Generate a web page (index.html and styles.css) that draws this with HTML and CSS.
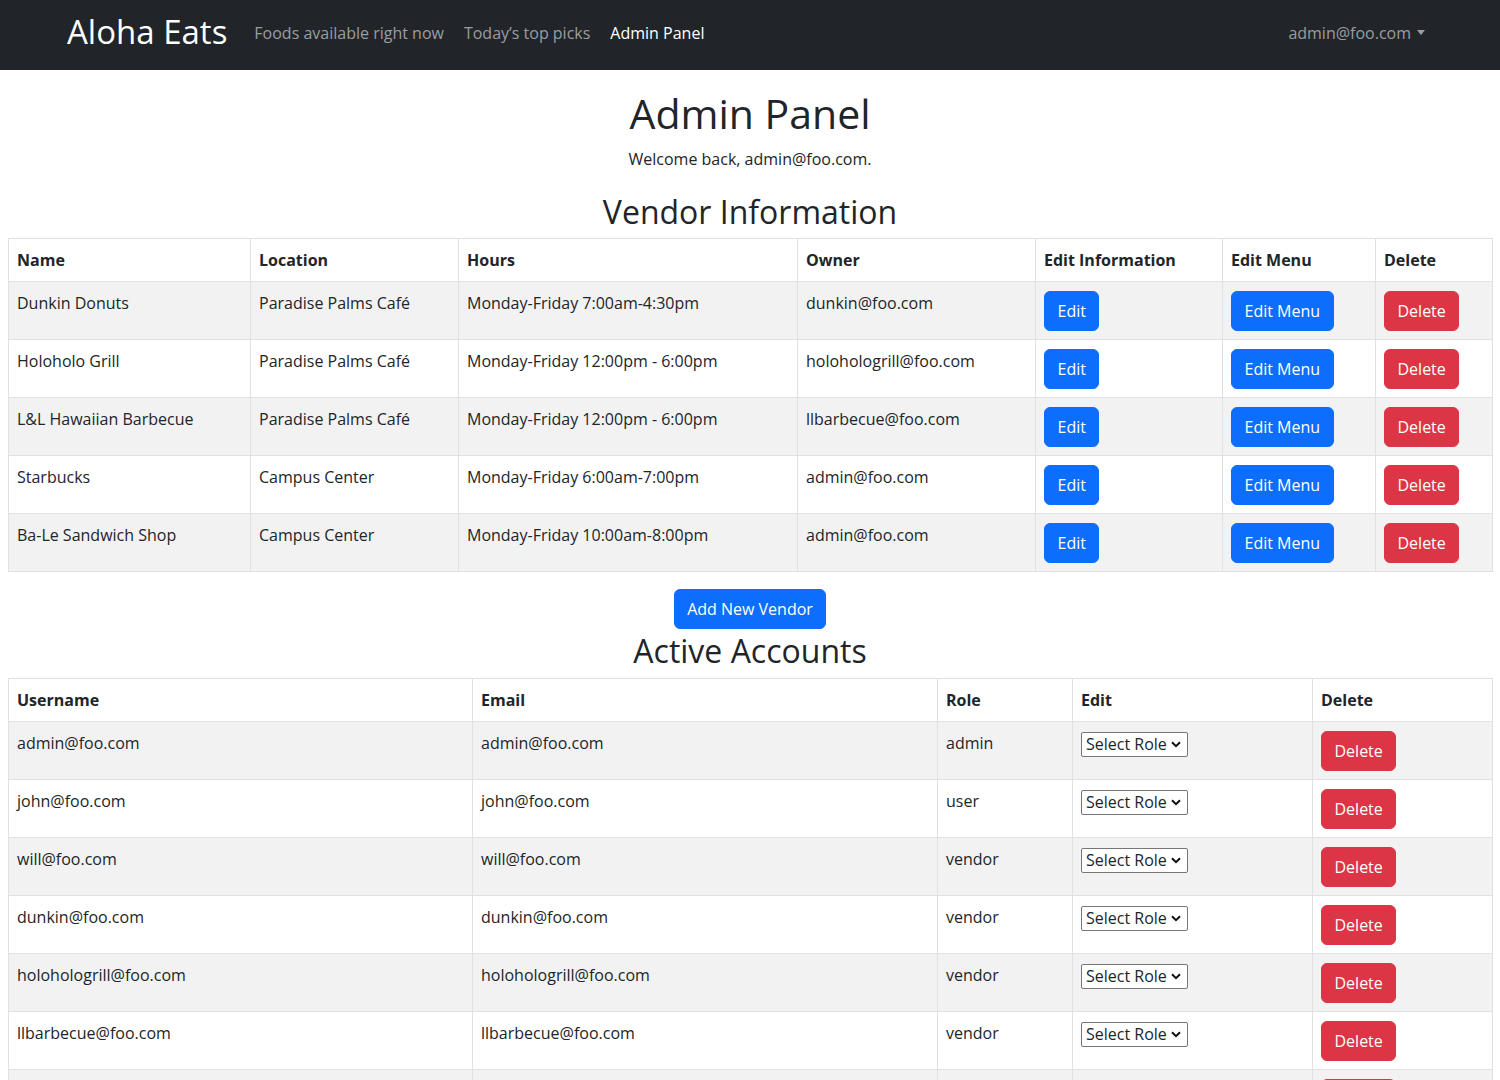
FILE: index.html
```html
<!DOCTYPE html>
<html lang="en">
<head>
<meta charset="utf-8">
<title>Aloha Eats - Admin Panel</title>
<link rel="stylesheet" href="styles.css">
</head>
<body>
<nav class="navbar">
  <div class="nav-left">
    <a class="brand" href="#">Aloha Eats</a>
    <a class="nav-link" href="#">Foods available right now</a>
    <a class="nav-link" href="#">Today’s top picks</a>
    <a class="nav-link active" href="#">Admin Panel</a>
  </div>
  <div class="nav-right">
    <a class="nav-link dropdown-toggle" href="#">admin@foo.com</a>
  </div>
</nav>

<main class="page">
  <h1 class="title">Admin Panel</h1>
  <p class="welcome">Welcome back, admin@foo.com.</p>

  <h2 class="section-title vendor-title">Vendor Information</h2>
  <table class="grid vendors">
    <colgroup>
      <col class="v-name"><col class="v-loc"><col class="v-hours"><col class="v-owner"><col class="v-edit"><col class="v-menu"><col class="v-del">
    </colgroup>
    <thead>
      <tr><th>Name</th><th>Location</th><th>Hours</th><th>Owner</th><th>Edit Information</th><th>Edit Menu</th><th>Delete</th></tr>
    </thead>
    <tbody>
      <tr><td>Dunkin Donuts</td><td>Paradise Palms Café</td><td>Monday-Friday 7:00am-4:30pm</td><td>dunkin@foo.com</td><td><button class="btn blue">Edit</button></td><td><button class="btn blue">Edit Menu</button></td><td><button class="btn red">Delete</button></td></tr>
      <tr><td>Holoholo Grill</td><td>Paradise Palms Café</td><td>Monday-Friday 12:00pm - 6:00pm</td><td>holohologrill@foo.com</td><td><button class="btn blue">Edit</button></td><td><button class="btn blue">Edit Menu</button></td><td><button class="btn red">Delete</button></td></tr>
      <tr><td>L&amp;L Hawaiian Barbecue</td><td>Paradise Palms Café</td><td>Monday-Friday 12:00pm - 6:00pm</td><td>llbarbecue@foo.com</td><td><button class="btn blue">Edit</button></td><td><button class="btn blue">Edit Menu</button></td><td><button class="btn red">Delete</button></td></tr>
      <tr><td>Starbucks</td><td>Campus Center</td><td>Monday-Friday 6:00am-7:00pm</td><td>admin@foo.com</td><td><button class="btn blue">Edit</button></td><td><button class="btn blue">Edit Menu</button></td><td><button class="btn red">Delete</button></td></tr>
      <tr><td>Ba-Le Sandwich Shop</td><td>Campus Center</td><td>Monday-Friday 10:00am-8:00pm</td><td>admin@foo.com</td><td><button class="btn blue">Edit</button></td><td><button class="btn blue">Edit Menu</button></td><td><button class="btn red">Delete</button></td></tr>
    </tbody>
  </table>

  <div class="add-row"><button class="btn blue">Add New Vendor</button></div>

  <h2 class="section-title accounts-title">Active Accounts</h2>
  <table class="grid accounts">
    <colgroup>
      <col class="a-user"><col class="a-email"><col class="a-role"><col class="a-edit"><col class="a-del">
    </colgroup>
    <thead>
      <tr><th>Username</th><th>Email</th><th>Role</th><th>Edit</th><th>Delete</th></tr>
    </thead>
    <tbody>
      <tr><td>admin@foo.com</td><td>admin@foo.com</td><td>admin</td><td><select class="role"><option>Select Role</option><option>admin</option><option>user</option><option>vendor</option></select></td><td><button class="btn red">Delete</button></td></tr>
      <tr><td>john@foo.com</td><td>john@foo.com</td><td>user</td><td><select class="role"><option>Select Role</option><option>admin</option><option>user</option><option>vendor</option></select></td><td><button class="btn red">Delete</button></td></tr>
      <tr><td>will@foo.com</td><td>will@foo.com</td><td>vendor</td><td><select class="role"><option>Select Role</option><option>admin</option><option>user</option><option>vendor</option></select></td><td><button class="btn red">Delete</button></td></tr>
      <tr><td>dunkin@foo.com</td><td>dunkin@foo.com</td><td>vendor</td><td><select class="role"><option>Select Role</option><option>admin</option><option>user</option><option>vendor</option></select></td><td><button class="btn red">Delete</button></td></tr>
      <tr><td>holohologrill@foo.com</td><td>holohologrill@foo.com</td><td>vendor</td><td><select class="role"><option>Select Role</option><option>admin</option><option>user</option><option>vendor</option></select></td><td><button class="btn red">Delete</button></td></tr>
      <tr><td>llbarbecue@foo.com</td><td>llbarbecue@foo.com</td><td>vendor</td><td><select class="role"><option>Select Role</option><option>admin</option><option>user</option><option>vendor</option></select></td><td><button class="btn red">Delete</button></td></tr>
      <tr><td>balesandwich@foo.com</td><td>balesandwich@foo.com</td><td>vendor</td><td><select class="role"><option>Select Role</option><option>admin</option><option>user</option><option>vendor</option></select></td><td><button class="btn red">Delete</button></td></tr>
    </tbody>
  </table>
</main>
</body>
</html>
```

FILE: styles.css
```css
* { box-sizing: border-box; }

html, body {
  margin: 0;
  padding: 0;
}

body {
  font-family: "Open Sans", "Noto Sans", "DejaVu Sans", sans-serif;
  font-size: 16px;
  line-height: 25px;
  color: #212529;
  background: #ffffff;
}

a { text-decoration: none; }

/* Navbar */
.navbar {
  height: 70px;
  background: #212529;
  display: flex;
  align-items: center;
  justify-content: space-between;
  padding: 0 75px 0 67px;
}

.nav-left {
  display: flex;
  align-items: center;
}

.brand {
  color: #ffffff;
  font-size: 33px;
  line-height: 40px;
  margin-right: 27px;
  margin-top: -6px;
}

.nav-link {
  color: #9a9da0;
  font-size: 16px;
  line-height: 25px;
  margin-right: 20px;
  margin-top: -4px;
}

.nav-link.active { color: #ffffff; }

.nav-right { display: flex; align-items: center; }

.nav-right .nav-link {
  margin-right: 0;
  display: inline-flex;
  align-items: center;
}

.dropdown-toggle::after {
  content: "";
  display: block;
  margin-left: 6px;
  margin-top: -2px;
  border-top: 5px solid currentColor;
  border-left: 4px solid transparent;
  border-right: 4px solid transparent;
}

/* Page */
.page {
  padding: 0 8px;
  display: flex;
  flex-direction: column;
}

.title {
  margin: 19px 0 0;
  text-align: center;
  font-size: 41px;
  line-height: 48px;
  font-weight: 500;
}

.welcome {
  margin: 10px 0 0;
  text-align: center;
  font-size: 16px;
  line-height: 25px;
}

.section-title {
  text-align: center;
  font-size: 32px;
  line-height: 38px;
  font-weight: 500;
  margin: 0 0 7px;
}

.vendor-title { margin-top: 21px; }
.accounts-title { margin-top: 3px; margin-bottom: 8px; }

/* Tables */
.grid {
  width: 100%;
  border-collapse: collapse;
  table-layout: fixed;
}

.grid th,
.grid td {
  border: 1px solid #dee2e6;
  padding: 9px 8px 8px;
  text-align: left;
  vertical-align: top;
  white-space: nowrap;
  overflow: hidden;
}

.grid th {
  font-weight: 700;
}

.grid tbody tr:nth-child(odd) td {
  background: #f2f2f2;
}

.v-name { width: 242px; }
.v-loc { width: 208px; }
.v-hours { width: 339px; }
.v-owner { width: 238px; }
.v-edit { width: 187px; }
.v-menu { width: 153px; }
.v-del { width: 117px; }

.a-user { width: 464px; }
.a-email { width: 465px; }
.a-role { width: 135px; }
.a-edit { width: 240px; }
.a-del { width: 180px; }

/* Buttons */
.btn {
  font-family: inherit;
  font-size: 16px;
  line-height: 25px;
  padding: 6.5px 12.5px;
  border: 1px solid transparent;
  border-radius: 6px;
  color: #ffffff;
  cursor: pointer;
  display: inline-block;
  vertical-align: top;
}

.btn.blue {
  background: #0d6efd;
  border-color: #0d6efd;
}

.btn.red {
  background: #dc3545;
  border-color: #dc3545;
}

.add-row {
  display: flex;
  justify-content: center;
  margin-top: 17px;
}

/* Select */
.role {
  appearance: none;
  -webkit-appearance: none;
  font-family: inherit;
  font-size: 16px;
  line-height: 21px;
  height: 25px;
  width: 107px;
  padding: 0 18px 0 4px;
  border: 1px solid #767676;
  border-radius: 2px;
  color: #212529;
  background-color: #ffffff;
  background-image: url("data:image/svg+xml,%3Csvg xmlns='http://www.w3.org/2000/svg' width='10' height='7' viewBox='0 0 10 7'%3E%3Cpath d='M1 1.2 L5 5.2 L9 1.2' fill='none' stroke='%23111' stroke-width='2'/%3E%3C/svg%3E");
  background-repeat: no-repeat;
  background-position: right 6px center;
  margin-top: 1px;
  vertical-align: top;
}
```
